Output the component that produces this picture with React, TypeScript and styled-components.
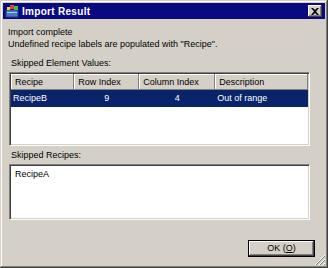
import React from "react";
import styled, { createGlobalStyle } from "styled-components";

const GlobalStyle = createGlobalStyle`
  html, body {
    margin: 0;
    padding: 0;
    background: #d4d0c8;
  }
  body {
    font-family: "Liberation Sans", Arial, sans-serif;
    font-size: 9px;
    color: #000;
  }
`;

const columns = [
  { title: "Recipe", width: 64, align: "left" },
  { title: "Row Index", width: 66, align: "center" },
  { title: "Column Index", width: 77, align: "center" },
  { title: "Description", width: 94, align: "left" },
];

const rows = [["RecipeB", "9", "4", "Out of range"]];

const AppIcon = () => (
  <svg width="14" height="14" viewBox="0 0 14 14">
    <rect x="1" y="6" width="12" height="7" fill="#4a78c8" stroke="#1a3c80" strokeWidth="1" />
    <rect x="2" y="8" width="10" height="1" fill="#a8c8f0" />
    <rect x="5" y="1" width="4" height="4" fill="#e04040" />
    <rect x="9" y="2" width="4" height="4" fill="#40c040" />
    <rect x="2" y="3" width="3" height="3" fill="#f0d040" />
  </svg>
);

const App: React.FC = () => {
  return (
    <>
      <GlobalStyle />
      <Window>
        <TitleBar>
          <AppIcon />
          <Title>Import Result</Title>
          <CloseButton>
            <svg width="8" height="7" viewBox="0 0 8 7">
              <path d="M0 0h2l2 2 2-2h2L5 3.5 8 7H6L4 5 2 7H0l3-3.5z" fill="#000" />
            </svg>
          </CloseButton>
        </TitleBar>
        <Body>
          <InfoText>
            Import complete
            <br />
            Undefined recipe labels are populated with "Recipe".
          </InfoText>
          <SectionLabel>Skipped Element Values:</SectionLabel>
          <ListView>
            <HeaderRow>
              {columns.map((c) => (
                <HeaderCell key={c.title} $width={c.width}>
                  {c.title}
                </HeaderCell>
              ))}
            </HeaderRow>
            {rows.map((r, i) => (
              <DataRow key={i} $selected={i === 0}>
                {r.map((v, j) => (
                  <DataCell key={j} $width={columns[j].width} $align={columns[j].align}>
                    {v}
                  </DataCell>
                ))}
              </DataRow>
            ))}
          </ListView>
          <SectionLabel>Skipped Recipes:</SectionLabel>
          <TextBox>RecipeA</TextBox>
          <Footer>
            <OkButton>
              OK (<u>O</u>)
            </OkButton>
          </Footer>
        </Body>
        <Grip>
          <svg width="12" height="12" viewBox="0 0 12 12">
            <path d="M11 1L1 11M11 5L5 11M11 9L9 11" stroke="#fff" strokeWidth="1" />
            <path d="M11 2L2 11M11 6L6 11M11 10L10 11" stroke="#808080" strokeWidth="1" />
          </svg>
        </Grip>
      </Window>
    </>
  );
};

const Window = styled.div`
  position: relative;
  width: 328px;
  height: 268px;
  box-sizing: border-box;
  padding: 3px;
  background: #d4d0c8;
  box-shadow: inset -1px -1px 0 #404040, inset 1px 1px 0 #d4d0c8,
    inset -2px -2px 0 #808080, inset 2px 2px 0 #ffffff;
  display: flex;
  flex-direction: column;
`;

const TitleBar = styled.div`
  height: 16px;
  background: #0a0a80;
  display: flex;
  align-items: center;
  padding: 0 3px 0 2px;
  gap: 3px;
`;

const Title = styled.span`
  flex: 1;
  color: #fff;
  font-weight: bold;
  font-size: 10px;
  letter-spacing: 0.3px;
`;

const CloseButton = styled.div`
  width: 14px;
  height: 12px;
  box-sizing: border-box;
  background: #d4d0c8;
  box-shadow: inset -1px -1px 0 #404040, inset 1px 1px 0 #ffffff,
    inset -2px -2px 0 #808080;
  display: flex;
  align-items: center;
  justify-content: center;
`;

const Body = styled.div`
  flex: 1;
  display: flex;
  flex-direction: column;
  padding: 7px 0 0 5px;
`;

const InfoText = styled.div`
  line-height: 12px;
  margin-bottom: 7px;
`;

const SectionLabel = styled.div`
  line-height: 12px;
  padding-left: 3px;
  margin-bottom: 3px;
`;

const ListView = styled.div`
  width: 301px;
  height: 74px;
  box-sizing: border-box;
  background: #fff;
  border: 1px solid;
  border-color: #808080 #ffffff #ffffff #808080;
  box-shadow: inset 1px 1px 0 #404040, inset -1px -1px 0 #d4d0c8;
  padding: 1px;
  margin-left: 1px;
  margin-bottom: 3px;
`;

const HeaderRow = styled.div`
  display: flex;
  height: 16px;
`;

const HeaderCell = styled.div<{ $width: number }>`
  width: ${(p) => p.$width}px;
  box-sizing: border-box;
  background: #d4d0c8;
  box-shadow: inset -1px -1px 0 #808080, inset 1px 1px 0 #ffffff;
  padding: 0 4px;
  line-height: 16px;
  white-space: nowrap;
  overflow: hidden;
`;

const DataRow = styled.div<{ $selected: boolean }>`
  display: flex;
  height: 17px;
  background: ${(p) => (p.$selected ? "#0a246a" : "transparent")};
  color: ${(p) => (p.$selected ? "#fff" : "#000")};
`;

const DataCell = styled.div<{ $width: number; $align: string }>`
  width: ${(p) => p.$width}px;
  padding: 0 2px;
  box-sizing: border-box;
  text-align: ${(p) => p.$align};
  line-height: 17px;
  white-space: nowrap;
`;

const TextBox = styled.div`
  width: 301px;
  height: 56px;
  box-sizing: border-box;
  background: #fff;
  border: 1px solid;
  border-color: #808080 #ffffff #ffffff #808080;
  box-shadow: inset 1px 1px 0 #404040, inset -1px -1px 0 #d4d0c8;
  padding: 4px 5px;
  margin-left: 1px;
`;

const Footer = styled.div`
  display: flex;
  justify-content: flex-end;
  padding: 20px 10px 0 0;
`;

const OkButton = styled.div`
  width: 67px;
  height: 17px;
  box-sizing: border-box;
  border: 1px solid #000;
  background: #d4d0c8;
  box-shadow: inset -1px -1px 0 #404040, inset 1px 1px 0 #ffffff,
    inset -2px -2px 0 #808080;
  text-align: center;
  line-height: 15px;
`;

const Grip = styled.div`
  position: absolute;
  right: 2px;
  bottom: 2px;
  width: 12px;
  height: 12px;
`;

export default App;
